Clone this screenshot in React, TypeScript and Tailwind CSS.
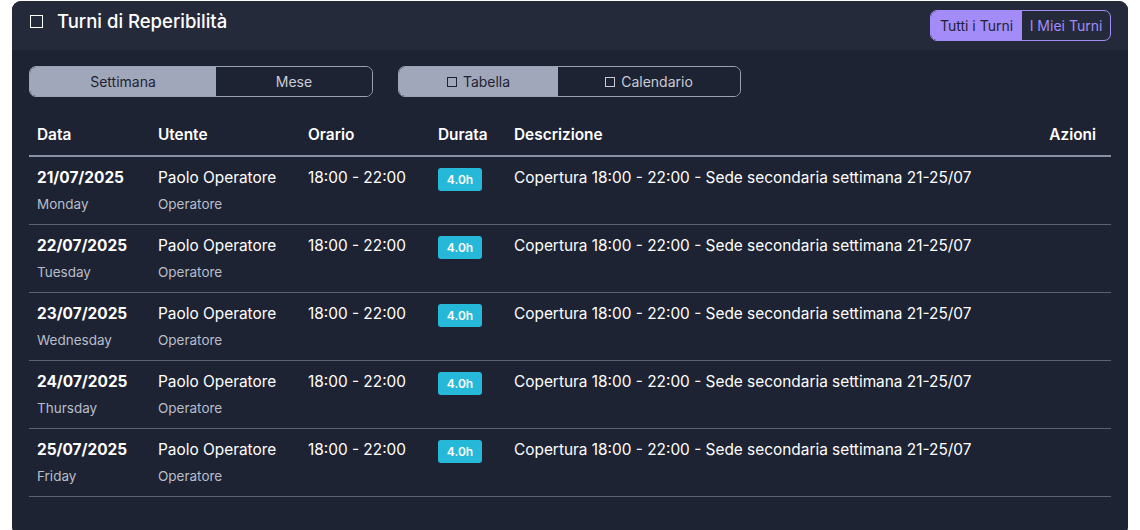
import React from "react";

type Shift = {
  date: string;
  day: string;
};

const SHIFTS: Shift[] = [
  { date: "21/07/2025", day: "Monday" },
  { date: "22/07/2025", day: "Tuesday" },
  { date: "23/07/2025", day: "Wednesday" },
  { date: "24/07/2025", day: "Thursday" },
  { date: "25/07/2025", day: "Friday" },
];

const FONT = { fontFamily: "Inter, 'Noto Sans', sans-serif" };

function Segmented({
  options,
  widths,
}: {
  options: React.ReactNode[];
  widths: string[];
}) {
  return (
    <div className="flex h-[31px] overflow-hidden rounded-[7px] border border-[#9aa2b5]">
      {options.map((label, i) => (
        <div
          key={i}
          className={`${widths[i]} flex items-center justify-center text-[14px] ${
            i === 0 ? "bg-[#a0a7ba] text-[#1e2333]" : "bg-[#1e2333] text-[#c8ccd6]"
          }`}
        >
          {label}
        </div>
      ))}
    </div>
  );
}

export default function App() {
  return (
    <div className="h-[530px] w-[1140px] bg-white pl-[12px] pr-[12px] pt-[1px]" style={FONT}>
      <div className="h-[535px] overflow-hidden rounded-[9px] bg-[#1e2333]">
        <div className="flex h-[49px] items-start justify-between bg-[#252a3a] pl-[18px] pr-[17px]">
          <div className="flex items-center gap-[14px] pt-[6px] text-[18.5px] font-medium leading-[28px] text-white">
            <span className="inline-block h-[13px] w-[13px] border-[1.5px] border-white" />
            <span>Turni di Reperibilità</span>
          </div>
          <div className="mt-[9px] flex h-[31px] overflow-hidden rounded-[7px] border border-[#a48cf8] text-[14px]">
            <div className="flex w-[91px] items-center justify-center bg-[#a48cf8] text-[#1e2333]">Tutti i Turni</div>
            <div className="flex w-[88px] items-center justify-center text-[#a48cf8]">I Miei Turni</div>
          </div>
        </div>

        <div className="px-[17px] pt-[16px]">
          <div className="flex gap-[25px]">
            <Segmented options={["Settimana", "Mese"]} widths={["w-[186px]", "w-[156px]"]} />
            <Segmented
              options={[
                <span key="t" className="flex items-center gap-[6px]">
                  <span className="inline-block h-[10px] w-[10px] border border-[#1e2333]" />
                  Tabella
                </span>,
                <span key="c" className="flex items-center gap-[6px]">
                  <span className="inline-block h-[10px] w-[10px] border border-[#c8ccd6]" />
                  Calendario
                </span>,
              ]}
              widths={["w-[159px]", "w-[182px]"]}
            />
          </div>

          <table className="mt-[14px] w-[1082px] table-fixed border-collapse text-left text-white">
            <thead>
              <tr className="border-b-2 border-[#8a92a6] text-[15.4px] font-semibold">
                <th className="w-[121px] px-[8px] pb-[9px] pt-[12px] font-semibold">Data</th>
                <th className="w-[150px] px-[8px] pb-[9px] pt-[12px] font-semibold">Utente</th>
                <th className="w-[130px] px-[8px] pb-[9px] pt-[12px] font-semibold">Orario</th>
                <th className="w-[76px] px-[8px] pb-[9px] pt-[12px] font-semibold">Durata</th>
                <th className="px-[8px] pb-[9px] pt-[12px] font-semibold">Descrizione</th>
                <th className="w-[110px] px-[15px] pb-[9px] pt-[12px] text-right font-semibold">Azioni</th>
              </tr>
            </thead>
            <tbody>
              {SHIFTS.map((s) => (
                <tr key={s.date} className="border-b border-[#5b6273] align-top">
                  <td className="px-[8px] pb-[11px] pt-[10px]">
                    <div className="text-[15.4px] font-bold leading-[22px]">{s.date}</div>
                    <div className="mt-[6px] text-[13.5px] leading-[18px] text-[#b8bdc9]">{s.day}</div>
                  </td>
                  <td className="px-[8px] pb-[11px] pt-[10px]">
                    <div className="text-[15.4px] leading-[22px]">Paolo Operatore</div>
                    <div className="mt-[6px] text-[13.5px] leading-[18px] text-[#b8bdc9]">Operatore</div>
                  </td>
                  <td className="px-[8px] pb-[11px] pt-[10px] text-[15.4px] leading-[22px]">18:00 - 22:00</td>
                  <td className="px-[8px] pb-[11px] pt-[11px]">
                    <div className="flex h-[23px] w-[44px] items-center justify-center rounded-[3px] bg-[#26b8d8] text-[12px] font-semibold leading-none text-white">
                      4.0h
                    </div>
                  </td>
                  <td className="whitespace-nowrap px-[8px] pb-[11px] pt-[10px] text-[15.4px] leading-[22px]">
                    Copertura 18:00 - 22:00 - Sede secondaria settimana 21-25/07
                  </td>
                  <td className="px-[8px] pb-[11px] pt-[10px]" />
                </tr>
              ))}
            </tbody>
          </table>
        </div>
      </div>
    </div>
  );
}
